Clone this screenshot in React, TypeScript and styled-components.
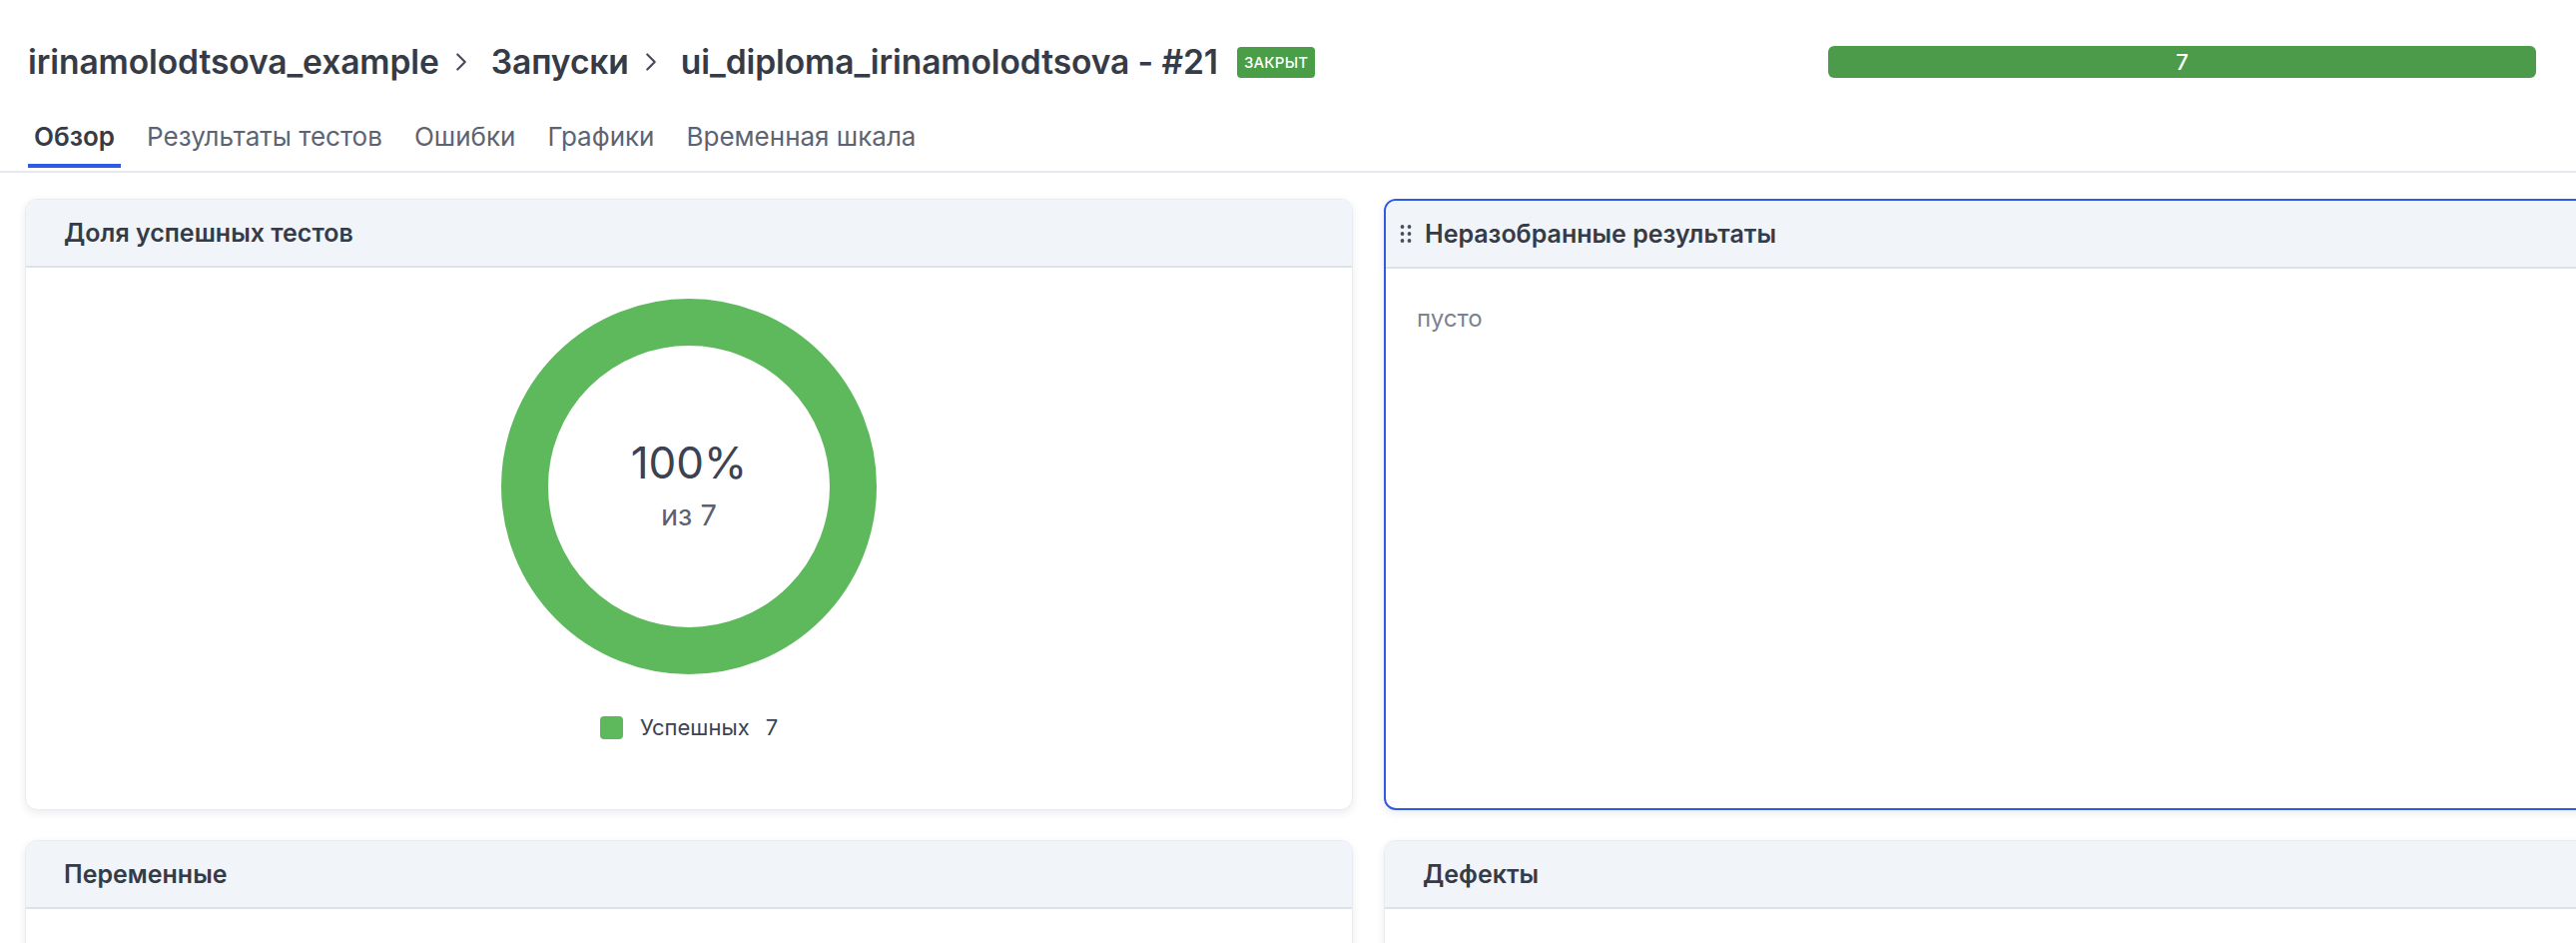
import React from "react";
import styled, { createGlobalStyle, css } from "styled-components";
import { ChevronRight } from "lucide-react";

const GlobalStyle = createGlobalStyle`
  html, body {
    margin: 0;
    padding: 0;
    background: #ffffff;
    overflow: hidden;
  }
  body {
    font-family: Inter, "Noto Sans", "DejaVu Sans", sans-serif;
    color: #353b47;
  }
  * {
    box-sizing: border-box;
  }
`;

const Page = styled.div`
  width: 2580px;
  height: 944px;
  overflow: hidden;
`;

const Header = styled.header`
  padding: 44px 40px 0 28px;
`;

const TitleRow = styled.div`
  display: flex;
  align-items: center;
  justify-content: space-between;
  height: 36px;
`;

const Breadcrumbs = styled.h1`
  display: flex;
  align-items: center;
  margin: 0;
  font-size: 33.6px;
  font-weight: 600;
  letter-spacing: -0.1px;
  color: #353b47;
  white-space: nowrap;
`;

const Crumb = styled.span`
  line-height: 36px;
`;

const Separator = styled(ChevronRight)`
  margin: 0 15px 0 7px;
  color: #454b58;
  flex-shrink: 0;
`;

const StatusBadge = styled.span`
  display: inline-flex;
  align-items: center;
  justify-content: center;
  height: 31px;
  padding: 0 7px;
  margin-left: 19px;
  border-radius: 4px;
  background: #4a9e48;
  color: #ffffff;
  font-size: 15px;
  font-weight: 500;
  letter-spacing: 0.2px;
`;

const ProgressBar = styled.div`
  width: 709px;
  height: 32px;
  border-radius: 6px;
  background: #4b9b4a;
  color: #ffffff;
  font-size: 22px;
  font-weight: 500;
  display: flex;
  align-items: center;
  justify-content: center;
`;

const TabList = styled.nav`
  display: flex;
  gap: 20px;
  margin-top: 41px;
  padding-bottom: 3px;
`;

const Tab = styled.div<{ $active?: boolean }>`
  padding: 0 6px 11px;
  line-height: 32px;
  font-size: 26px;
  font-weight: 400;
  color: #5c6473;
  border-bottom: 4px solid transparent;
  white-space: nowrap;
  ${(p) =>
    p.$active &&
    css`
      font-weight: 600;
      color: #353b47;
      border-bottom-color: #2d5be3;
    `}
`;

const Divider = styled.div`
  height: 2px;
  background: #e6eaef;
`;

const Grid = styled.main`
  display: grid;
  grid-template-columns: repeat(2, 1330px);
  grid-template-rows: 612px 400px;
  column-gap: 31px;
  row-gap: 30px;
  padding: 26px 25px 0;
`;

const Card = styled.section<{ $selected?: boolean }>`
  display: flex;
  flex-direction: column;
  background: #ffffff;
  border-radius: 12px;
  border: 1px solid #e8ecf1;
  box-shadow: 0 3px 8px rgba(30, 40, 60, 0.09);
  overflow: hidden;
  ${(p) =>
    p.$selected &&
    css`
      border: 2px solid #2d5be3;
    `}
`;

const CardHeader = styled.div<{ $draggable?: boolean }>`
  display: flex;
  align-items: center;
  gap: 13px;
  height: 68px;
  flex-shrink: 0;
  padding: 0 ${(p) => (p.$draggable ? "14px" : "38px")};
  background: #f1f4f8;
  border-bottom: 2px solid #dce2e9;
`;

const CardTitle = styled.h2`
  margin: 0;
  font-size: 25px;
  font-weight: 600;
  color: #353b47;
  white-space: nowrap;
`;

const CardBody = styled.div`
  flex: 1;
  display: flex;
  flex-direction: column;
`;

const ChartBody = styled(CardBody)`
  align-items: center;
  padding-top: 31px;
`;

const EmptyBody = styled(CardBody)`
  padding: 35px 31px;
`;

const EmptyText = styled.p`
  margin: 0;
  font-size: 24px;
  line-height: 30px;
  color: #7b8391;
`;

const Donut = styled.div`
  position: relative;
  width: 376px;
  height: 376px;
`;

const DonutCenter = styled.div`
  position: absolute;
  inset: 0;
  display: flex;
  flex-direction: column;
  align-items: center;
  justify-content: center;
  padding-bottom: 3px;
`;

const Percent = styled.div`
  font-size: 44px;
  line-height: 52px;
  font-weight: 400;
  color: #3b4252;
`;

const OutOf = styled.div`
  margin-top: 9px;
  font-size: 29px;
  line-height: 36px;
  color: #5a6171;
`;

const Legend = styled.div`
  display: flex;
  align-items: center;
  margin-top: 40px;
  font-size: 22px;
  color: #3c4354;
`;

const Swatch = styled.span`
  width: 23px;
  height: 23px;
  border-radius: 4px;
  background: #5eb95d;
  margin-right: 17px;
`;

const LegendCount = styled.span`
  margin-left: 16px;
`;

const DragHandle = () => (
  <svg width="12" height="20" viewBox="0 0 12 20" fill="#4a505c">
    <circle cx="2.5" cy="3" r="1.9" />
    <circle cx="9.5" cy="3" r="1.9" />
    <circle cx="2.5" cy="10" r="1.9" />
    <circle cx="9.5" cy="10" r="1.9" />
    <circle cx="2.5" cy="17" r="1.9" />
    <circle cx="9.5" cy="17" r="1.9" />
  </svg>
);

const tabs = ["Обзор", "Результаты тестов", "Ошибки", "Графики", "Временная шкала"];

export default function App() {
  return (
    <Page>
      <GlobalStyle />
      <Header>
        <TitleRow>
          <Breadcrumbs>
            <Crumb>irinamolodtsova_example</Crumb>
            <Separator size={30} strokeWidth={1.7} />
            <Crumb>Запуски</Crumb>
            <Separator size={30} strokeWidth={1.7} />
            <Crumb>ui_diploma_irinamolodtsova - #21</Crumb>
            <StatusBadge>ЗАКРЫТ</StatusBadge>
          </Breadcrumbs>
          <ProgressBar>7</ProgressBar>
        </TitleRow>
        <TabList>
          {tabs.map((t, i) => (
            <Tab key={t} $active={i === 0}>
              {t}
            </Tab>
          ))}
        </TabList>
      </Header>
      <Divider />
      <Grid>
        <Card>
          <CardHeader>
            <CardTitle>Доля успешных тестов</CardTitle>
          </CardHeader>
          <ChartBody>
            <Donut>
              <svg width="376" height="376" viewBox="0 0 376 376">
                <circle cx="188" cy="188" r="164.5" fill="none" stroke="#5eb95d" strokeWidth="47" />
              </svg>
              <DonutCenter>
                <Percent>100%</Percent>
                <OutOf>из 7</OutOf>
              </DonutCenter>
            </Donut>
            <Legend>
              <Swatch />
              <span>Успешных</span>
              <LegendCount>7</LegendCount>
            </Legend>
          </ChartBody>
        </Card>
        <Card $selected>
          <CardHeader $draggable>
            <DragHandle />
            <CardTitle>Неразобранные результаты</CardTitle>
          </CardHeader>
          <EmptyBody>
            <EmptyText>пусто</EmptyText>
          </EmptyBody>
        </Card>
        <Card>
          <CardHeader>
            <CardTitle>Переменные</CardTitle>
          </CardHeader>
          <CardBody />
        </Card>
        <Card>
          <CardHeader>
            <CardTitle>Дефекты</CardTitle>
          </CardHeader>
          <CardBody />
        </Card>
      </Grid>
    </Page>
  );
}
